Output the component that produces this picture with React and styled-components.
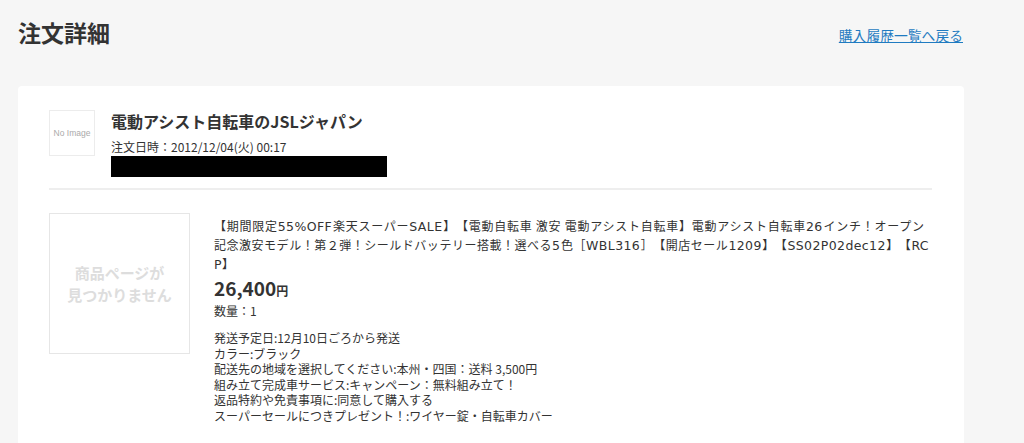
import React from 'react';
import styled, { createGlobalStyle } from "styled-components"

const GlobalStyle = createGlobalStyle`
  body {
    margin: 0;
    background: #f6f6f6;
    font-family: "Noto Sans CJK JP", "Noto Sans", sans-serif;
    color: #333;
    text-spacing-trim: space-all;
  }
`

// the item name wraps at these points in the original, each line with its own measure
const itemLines = [
  { text: "【期間限定55%OFF楽天スーパーSALE】【電動自転車 激安 電動アシスト自転車】電動アシスト自転車26インチ！オープン", width: 710 },
  { text: "記念激安モデル！第２弾！シールドバッテリー搭載！選べる5色［WBL316］【開店セール1209】【SS02P02dec12】【RC", width: 715 },
  { text: "P】" },
]

const details = [
  "発送予定日:12月10日ごろから発送",
  "カラー:ブラック",
  "配送先の地域を選択してください:本州・四国：送料 3,500円",
  "組み立て完成車サービス:キャンペーン：無料組み立て！",
  "返品特約や免責事項に:同意して購入する",
  "スーパーセールにつきプレゼント！:ワイヤー錠・自転車カバー",
]

// latin runs in the item name are set in a wider face, like the original
const withLatin = (text) =>
  text.split(/([A-Za-z0-9%]+)/).map((part, i) =>
    i % 2 ? <StyledLatin key={i}>{part}</StyledLatin> : part
  )

const App = () => {
  return (
    <StyledPage>
      <GlobalStyle />
      <StyledHeader>
        <StyledTitle>注文詳細</StyledTitle>
        <StyledBack href="#">購入履歴一覧へ戻る</StyledBack>
      </StyledHeader>
      <StyledCard>
        <StyledShop>
          <StyledNoImage>No Image</StyledNoImage>
          <div>
            <StyledShopName>電動アシスト自転車のJSLジャパン</StyledShopName>
            <StyledDate>注文日時：2012/12/04(火) 00:17</StyledDate>
            <StyledMasked />
          </div>
        </StyledShop>
        <StyledDivider />
        <StyledItem>
          <StyledItemImage>商品ページが<br />見つかりません</StyledItemImage>
          <StyledItemBody>
            <div>
              {itemLines.map((line) => (
                <StyledNameLine key={line.text} $width={line.width}>
                  {withLatin(line.text)}
                </StyledNameLine>
              ))}
            </div>
            <StyledPrice>26,400<small>円</small></StyledPrice>
            <StyledQty>数量：1</StyledQty>
            <StyledOptions>
              {details.map((d) => <li key={d}>{d}</li>)}
            </StyledOptions>
          </StyledItemBody>
        </StyledItem>
      </StyledCard>
    </StyledPage>
  )
}

const StyledPage = styled.div`
  width: 1024px;
  height: 443px;
  overflow: hidden;
  padding: 0 60px 0 18px;
  box-sizing: border-box;
`

const StyledHeader = styled.header`
  display: flex;
  justify-content: space-between;
  align-items: flex-start;
  height: 86px;
`

const StyledTitle = styled.h1`
  margin: 16px 0 0;
  font-size: 23px;
  line-height: 32px;
  font-weight: bold;
  color: #333;
`

const StyledBack = styled.a`
  margin: 25px 1px 0 0;
  font-size: 13.8px;
  line-height: 20px;
  color: #1f7bc1;
  text-decoration: underline;
`

const StyledCard = styled.section`
  background: #fff;
  border-radius: 4px;
  padding: 24px 32px 40px 31px;
  min-height: 400px;
`

const StyledShop = styled.div`
  display: flex;
  gap: 16px;
`

const StyledNoImage = styled.div`
  width: 46px;
  height: 46px;
  box-sizing: border-box;
  border: 1px solid #ececec;
  display: flex;
  align-items: center;
  justify-content: center;
  font-family: "Liberation Sans", sans-serif;
  font-size: 8.5px;
  color: #aaa;
`

const StyledShopName = styled.div`
  font-size: 16px;
  font-weight: bold;
  line-height: 22px;
`

const StyledDate = styled.div`
  font-size: 12px;
  line-height: 18px;
  margin-top: 6px;
`

const StyledMasked = styled.div`
  width: 276px;
  height: 21px;
  background: #000;
`

const StyledDivider = styled.hr`
  border: 0;
  height: 2px;
  background: #eee;
  margin: 11px 0 23px;
`

const StyledItem = styled.div`
  display: flex;
  gap: 24px;
`

const StyledItemImage = styled.div`
  flex: none;
  width: 141px;
  height: 141px;
  box-sizing: border-box;
  border: 1px solid #e6e6e6;
  display: flex;
  align-items: center;
  justify-content: center;
  text-align: center;
  font-size: 15px;
  line-height: 22px;
  font-weight: bold;
  color: #ddd;
`

const StyledItemBody = styled.div`
  flex: 1;
  padding-top: 4px;
  font-size: 12px;
  line-height: 18px;
`

const StyledNameLine = styled.div`
  white-space: nowrap;
  width: ${(p) => (p.$width ? `${p.$width}px` : "auto")};
  text-align: ${(p) => (p.$width ? "justify" : "left")};
  text-align-last: ${(p) => (p.$width ? "justify" : "auto")};
  white-space: ${(p) => (p.$width ? "normal" : "nowrap")};
`

const StyledLatin = styled.span`
  font-family: "DejaVu Sans", sans-serif;
  font-size: 12.5px;
  letter-spacing: 0.4px;
`

const StyledPrice = styled.div`
  margin-top: 2px;
  font-size: 19px;
  font-weight: bold;
  line-height: 24px;

  small {
    font-size: 12px;
  }
`

const StyledQty = styled.div`
  margin-top: -1px;
`

const StyledOptions = styled.ul`
  list-style: none;
  margin: 10px 0 0;
  padding: 0;
  line-height: 15.6px;
`

export default App
